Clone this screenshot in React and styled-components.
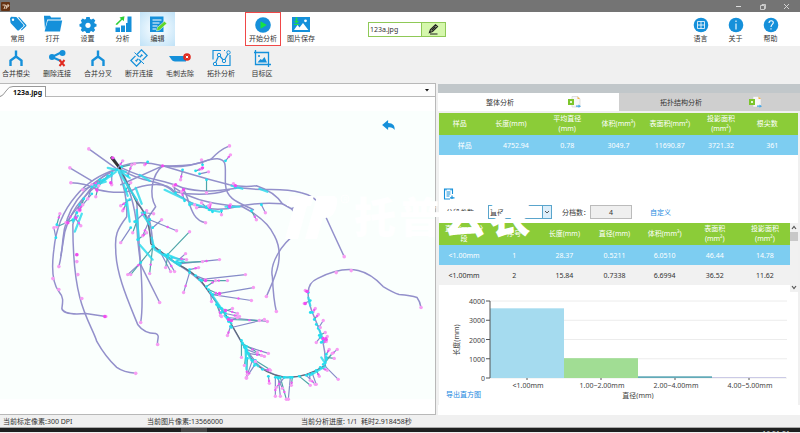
import React from "react";
import styled, { createGlobalStyle } from "styled-components";

const GlobalStyle = createGlobalStyle`
    * {
        box-sizing: border-box;
    }
    body {
        margin: 0;
        background: #f0f0f0;
    }
    body, button, input, select {
        font-family: "Noto Sans", "Noto Sans CJK SC", sans-serif;
        font-size: 7px;
        line-height: 9px;
        color: #333;
    }
    button {
        padding: 0;
        border: 0;
        background: none;
    }
`;

const BLUE = "#1590da";

const Window = styled.div`
    display: flex;
    flex-direction: column;
`;

const TitleBar = styled.header`
    height: 12px;
    display: flex;
    align-items: center;
    justify-content: space-between;
    padding: 0 10px 0 1px;
    background: #747474;
    svg {
        display: block;
    }
`;

const WindowButtons = styled.div`
    display: flex;
    gap: 17px;
    button {
        width: 7px;
        height: 7px;
    }
`;

const Toolbar = styled.nav`
    height: 34px;
    display: flex;
    align-items: center;
    padding-right: 12px;
    background: #fff;
`;

const SubToolbar = styled.nav`
    height: 37px;
    display: flex;
    gap: 11px;
    padding-left: 1px;
    background: #f0f0f0;
`;

const Group = styled.div`
    display: flex;
    gap: ${props => props.$gap || 0}px;
    margin-left: ${props => props.$left || "0"};
`;

const ToolButton = styled.button`
    width: ${props => props.$width || 35}px;
    height: 34px;
    display: flex;
    flex-direction: column;
    align-items: center;
    justify-content: center;
    gap: ${props => props.$gap || 1}px;
    white-space: nowrap;
    border: ${props => (props.$framed ? "1px solid #f04848" : "0")};
    background: ${props => (props.$active ? "radial-gradient(#f2faff 20%, #c0e2f7 100%)" : "none")};
    svg {
        display: block;
        flex: none;
    }
`;

const FileField = styled.div`
    display: flex;
    width: 78px;
    height: 15px;
    margin-left: 49px;
    border: 1px solid #8fc957;
    input {
        flex: 1;
        min-width: 0;
        padding: 0 1px;
        border: 0;
        border-right: 1px solid #8fc957;
    }
    button {
        width: 23px;
        background: #d5f7ac;
    }
    svg {
        display: block;
        margin: auto;
    }
`;

const Main = styled.main`
    position: relative;
    display: grid;
    grid-template-columns: minmax(0, 437fr) minmax(0, 363fr);
`;

const Viewer = styled.section`
    display: flex;
    flex-direction: column;
    margin-right: 1px;
    border: 1px solid #b8b8b8;
    border-left-width: 0;
    background: #fff;
`;

const TabStrip = styled.div`
    height: 13px;
    display: flex;
    align-items: flex-end;
    justify-content: space-between;
    padding-right: 5px;
    border-bottom: 1px solid #b8b8b8;
    background: #fcfcfc;
`;

const FileTab = styled.button`
    display: flex;
    align-items: center;
    height: 11px;
    margin-bottom: -1px;
    font-weight: bold;
    color: #111;
    svg {
        display: block;
    }
    span {
        height: 11px;
        padding: 1px 3px 0 0;
        border: 1px solid #999;
        border-width: 1px 1px 0 0;
        background: #fff;
    }
`;

const TabMenu = styled.button`
    height: 12px;
    svg {
        display: block;
    }
`;

const Scan = styled.svg`
    display: block;
    width: 100%;
`;

const Results = styled.section`
    display: flex;
    flex-direction: column;
    padding: 1px 0 0 1px;
    background: #f0f0f0;
`;

const Strip = styled.div`
    height: 9px;
    background: #c1c7ca;
`;

const Tabs = styled.div`
    display: grid;
    grid-template-columns: 1fr 1fr;
`;

const ResultTab = styled.button`
    height: 18px;
    display: flex;
    align-items: center;
    justify-content: space-between;
    padding: ${props => (props.$active ? "0 38px 0 48px" : "0 38px 0 41px")};
    background: ${props => (props.$active ? "#fff" : "#cfcfcf")};
`;

const Panel = styled.div`
    flex: 1;
    display: flex;
    flex-direction: column;
    margin: 2px 2px 0 1px;
    background: #fff;
`;

const Table = styled.table`
    width: 100%;
    table-layout: fixed;
    border-collapse: collapse;
    text-align: center;
    th {
        height: 22px;
        padding: 0;
        font-weight: normal;
        line-height: 10px;
        color: #fff;
        background: #8bcc38;
    }
    th.shifted {
        padding-right: 10px;
    }
    td {
        height: 20px;
        padding: 0;
        background: #f1f1f1;
    }
    tr.selected td {
        color: #fff;
        background: #7dcdf1;
    }
`;

const AddButton = styled.button`
    align-self: flex-start;
    margin: 33px 0 0 4px;
    svg {
        display: block;
    }
`;

const Form = styled.form`
    display: flex;
    align-items: center;
    height: 14px;
    margin: 5px 0 4px;
    padding-left: 7px;
    a {
        margin-left: 18px;
        color: #2288e0;
        text-decoration: none;
    }
`;

const Picker = styled.div`
    display: flex;
    width: 64px;
    height: 14px;
    margin: 0 10px 0 14px;
    border: 1px solid #5aa5cc;
    background: linear-gradient(to left, #dceefa 8px, #5aa5cc 8px, #5aa5cc 9px, #fff 9px);
    select {
        flex: 1;
        min-width: 0;
        padding: 0 1px;
        appearance: none;
        border: 0;
        background: none;
    }
    svg {
        width: 8px;
        height: 12px;
    }
`;

const CountInput = styled.input`
    width: 42px;
    height: 14px;
    padding: 0;
    border: 1px solid #bbb;
    background: #efefef;
    text-align: center;
`;

const ScrollArea = styled.div`
    display: flex;
    align-items: flex-start;
    height: 69px;
`;

const ScrollBar = styled.div`
    flex: none;
    width: 8px;
    height: 69px;
    display: flex;
    flex-direction: column;
    align-items: center;
    background: #f1f1f1;
    svg {
        display: block;
    }
`;

const Thumb = styled.div`
    width: 8px;
    height: 9px;
    margin-bottom: auto;
    background: #c8c8c8;
`;

const ChartBox = styled.figure`
    margin: 0;
    svg {
        display: block;
        width: 100%;
    }
`;

const ExportLink = styled.a`
    align-self: flex-start;
    margin: -9px 0 0 7px;
    color: #2288e0;
    text-decoration: none;
`;

const PanelFoot = styled.div`
    height: 10px;
    background: #fff;
`;

const Watermark = styled.div`
    position: absolute;
    top: 110px;
    left: 35%;
    display: flex;
    align-items: center;
    gap: 4px;
    pointer-events: none;
    color: #fff;
`;

const WatermarkText = styled.div`
    display: flex;
    gap: 3px;
    font-size: 42px;
    font-weight: 900;
    line-height: 44px;
`;

const StatusBar = styled.footer`
    height: 12px;
    display: grid;
    grid-template-columns: 144fr 154fr 499fr;
    align-items: center;
    padding-left: 3px;
    background: #f0f0f0;
    white-space: pre;
`;

const TaskBar = styled.div`
    height: 5px;
    display: flex;
    justify-content: flex-end;
    padding: 1px 10px 0 0;
    overflow: hidden;
    color: #ddd;
    border-top: 1px solid #aaa;
    background: linear-gradient(to right, #1f2020 181px, #484848 181px, #484848 207px, #1f2020 207px);
`;

const Icon = ({ w = 18, h = 18, children }) => (
    <svg width={w} height={h} viewBox={`0 0 ${w} ${h}`} fill={BLUE} aria-hidden="true">
        {children}
    </svg>
);

const TagIcon = () => (
    <Icon>
        <path d="M1 3.2 2.2 1.8 7.4 2 14.2 9.6c.5.6.5 1.2 0 1.7l-4.2 3.9c-.6.5-1.2.5-1.7 0L1.6 8z" />
        <path d="M9 2.2h1.4l6.8 7.5c.4.6.4 1 0 1.5l-4.5 4.4-.8-.8 4-4.2z" />
        <circle cx="4" cy="4.8" r="1.2" fill="#fff" />
    </Icon>
);

const FolderIcon = () => (
    <Icon w={20}>
        <path d="M1 2V.8h6l1.2 1.8h9.6v2H4.3L2 14z" />
        <path d="M4.8 5.6h14.4L17 16.6H1.6z" />
    </Icon>
);

const GearIcon = () => (
    <Icon>
        <path d="M7.3 2h3.4l.4 1.9 1.3.6 1.9-1.1 2 2.2-1.1 1.8.5 1.2 1.8.5v2.4l-1.8.5-.6 1.3 1.100 1.800-2 2.100-1.900-1.100-1.200.6-.5 1.700H7.300l-.5-1.700-1.300-.6-1.900 1-1.900-2 1-1.900-.5-1.200-1.700-.5V9.100l1.700-.5.6-1.200-1-1.800 1.900-2.100 1.900 1 1.300-.6z" />
        <circle cx="9" cy="10.300" r="2.600" fill="#fff" />
    </Icon>
);

const StatsIcon = () => (
    <Icon>
        <path d="M1.500 12.500H6v4.500H1.500zM7 10.500h4V17H7zM12 7h0M12 8h1.500v9H12zM13.500 1.500H17.500V17h-4z" />
        <path d="M1.500 9.200 7 4 5.500 2.500 10.500 1.300l-.8 5-1.500-1.500L3 10z" fill="#2fcf35" />
    </Icon>
);

const EditIcon = () => (
    <Icon>
        <path d="M1 1.500h13.500V17H1z" />
        <path d="M3.500 5h9M3.500 8h7M3.500 11h5M3.500 14h3.500" stroke="#fff" strokeWidth="1" />
        <path d="m7.500 16 .8-3.500 7.200-6.300 2.300 2.400-7.100 6.400z" fill="#5fd628" stroke="#fff" strokeWidth=".5" />
    </Icon>
);

const PlayIcon = () => (
    <Icon>
        <circle cx="9" cy="10" r="7.800" />
        <path d="M6.500 6.300v7.400L12.800 10z" fill="#15e343" />
    </Icon>
);

const PictureIcon = () => (
    <Icon>
        <path d="M0 2h18v15H0z" />
        <path d="m2 15 3.500-5 2 2.500L11 8l5.300 7z" fill="#fff" />
        <circle cx="13.500" cy="5.800" r="1.400" fill="#fff" />
        <path d="M3.700 2.500h1.600V6H7L4.500 8.500 2 6h1.700zM2 9h5v1H2z" fill="#20df45" />
    </Icon>
);

const RoundIcon = ({ children }) => (
    <Icon w={16} h={17}>
        <circle cx="8" cy="9" r="7.300" />
        <g fill="none" stroke="#fff" strokeWidth="1.100">{children}</g>
    </Icon>
);

const MergeIcon = () => (
    <Icon w={16}>
        <path d="M8 1.500v7M8 7.500 2.500 11.500V17M8 7.500l5.500 4V17" fill="none" stroke={BLUE} strokeWidth="2.400" />
    </Icon>
);

const DeleteLinkIcon = () => (
    <Icon>
        <path d="m4 8 9-4.500M4 8l9 4" stroke={BLUE} strokeWidth="2" />
        <circle cx="4" cy="8" r="3" />
        <circle cx="14.500" cy="4" r="3" />
        <path d="m11.500 11 5 6m0-6-5 6" stroke="#e12b20" strokeWidth="2" />
    </Icon>
);

const UnlinkIcon = () => (
    <Icon>
        <g fill="none" stroke={BLUE} strokeWidth="1.300" transform="rotate(-45 9 9)">
            <path d="M8 5H1.500v8H8v-3M5 8v2M10 13h6.500V5H10v3M13 8v2M4.500 9H8M10 9h3.500" />
        </g>
        <path d="m4.500 3.500 2 2M11.500 12.500l2.500 2.500" stroke={BLUE} />
    </Icon>
);

const SpurIcon = () => (
    <Icon w={22}>
        <path d="M0 7h17v5.500H6C3 12.500 2 9.500 0 7z" />
        <circle cx="18" cy="8" r="3.800" fill="#e12b20" />
        <path d="m16.800 6.800 2.400 2.400m0-2.400-2.400 2.400" stroke="#fff" />
    </Icon>
);

const TopologyIcon = () => (
    <Icon w={19}>
        <path d="M9 1.500H1v9M12 1.500h1M18 6v10.500H4M3 15 7 6l5 6 4.500-8" fill="none" stroke={BLUE} strokeWidth="1.200" />
        <g fill="#f0f0f0" stroke={BLUE}>
            <circle cx="3" cy="15" r="1.700" />
            <circle cx="7" cy="6" r="1.700" />
            <circle cx="12" cy="12" r="1.700" />
            <circle cx="16.500" cy="3.500" r="1.700" />
        </g>
    </Icon>
);

const TargetIcon = () => (
    <Icon>
        <path d="M2.500 1v14.500H18M1 3.500h14.500V18" fill="none" stroke={BLUE} strokeWidth="1.300" />
        <path d="m4.500 13.500 3-3.500 1.500 1 2.500-3 2.500 5.500z" />
        <circle cx="6" cy="7" r="1" />
    </Icon>
);

const SheetIcon = () => (
    <Icon w={13} h={12}>
        <path d="M4 .5h6L12 3v8H4z" fill="#f7f7f7" stroke="#ccc" strokeWidth=".6" />
        <path d="M9.500.500 12 3H9.500z" fill="#f4b44a" />
        <path d="M0 3h6v6H0z" fill="#7cc52b" />
        <path d="M2 5h2v2H2z" fill="#e8f7d5" />
        <path d="M8 9.500h2.500V8.500l2.500 1.800-2.500 1.500v-1H8z" fill="#45a6e6" />
    </Icon>
);

const Arrow = ({ up }) => (
    <Icon w={8} h={9}>
        <path d={up ? "m2 6 2-2.500L6 6" : "m2 3 2 2.500L6 3"} fill="none" stroke="#555" strokeWidth="1.200" />
    </Icon>
);

const TOOLS = [
    { label: "常用", icon: <TagIcon /> },
    { label: "打开", icon: <FolderIcon /> },
    { label: "设置", icon: <GearIcon /> },
    { label: "分析", icon: <StatsIcon /> },
    { label: "编辑", icon: <EditIcon />, active: true }
];

const HELP = [
    { label: "语言", icon: <RoundIcon><path d="M4.500 5.500h7v7h-7zM8 5.500v7M4.500 9h7" strokeWidth=".8" /></RoundIcon> },
    { label: "关于", icon: <RoundIcon><path d="M8 4.500V6M8 7.500v6" /></RoundIcon> },
    { label: "帮助", icon: <RoundIcon><path d="M6 7c0-3 4.300-3 4.300-.4C10.300 8.500 8 8.500 8 11M8 12.300v1.200" /></RoundIcon> }
];

const EDIT_TOOLS = [
    { label: "合并根尖", icon: <MergeIcon /> },
    { label: "删除连接", icon: <DeleteLinkIcon /> },
    { label: "合并分叉", icon: <MergeIcon /> },
    { label: "断开连接", icon: <UnlinkIcon /> },
    { label: "毛刺去除", icon: <SpurIcon /> },
    { label: "拓扑分析", icon: <TopologyIcon /> },
    { label: "目标区", icon: <TargetIcon /> }
];

// long roots, in scan coordinates
const ROOTS = [
    "M116 170C88 178 58 205 54 250C51 272 53 284 59 292C64 298 63 302 62 309C63 314 74 315 86 314L106 317",
    "M116 170C98 176 78 200 73 225C73 250 74 275 80 298C85 318 94 332 97 342Q106 358 117 368Q124 373 136 374",
    "M112 172C88 184 66 205 63 240Q62 255 59 267",
    "M112 174C90 190 72 205 65 232L61 256",
    "M119 172Q128 195 127 217C117 230 115 236 116 250C116 275 130 305 138 325C143 332 149 334 156 334C161 336 157 340 158 345",
    "M121 172C131 190 137 210 138 240Q140 258 141 265C142 285 144 305 141 323",
    "M137 200Q139 240 141 265L160 303",
    "M122 166Q140 160 163 166Q195 167 212 159Q220 150 230 146",
    "M163 166C195 170 205 158 218 159C229 160 225 168 226 185C227 200 240 203 254 210",
    "M163 166L190 174Q210 180 230 185Q245 188 257 186Q275 192 283 204L292 209L300 206M292 209L299 217",
    "M122 170C145 185 160 178 175 193C195 206 210 214 237 207Q260 202 283 204",
    "M122 168C150 182 160 178 183 188C205 194 225 190 240 188C270 192 280 187 302 193Q316 196 322 207Q330 225 345 257",
    "M175 188C195 202 220 205 243 207Q268 220 275 236C287 258 274 280 267 297",
    "M296 235C282 244 270 265 273 277Q274 300 277 312",
    "M183 188C191 200 190 220 206 223",
    "M71 183Q85 183 98 190Q125 196 137 188Q165 180 175 192Q205 198 230 190",
    "M89 149L117 169M70 168L92 181M163 166C152 175 149 195 156 207L149 217M121 185L163 166",
    "M149 216Q153 235 153 246C165 260 190 268 205 286"
];

const TAPROOT = "M114 158Q123 172 131 190Q140 206 149 220Q150 240 154 247Q165 255 177 264Q193 272 202 282Q218 305 228 318Q240 340 251 358Q265 374 285 378Q306 379 326 366Q327 345 316 320Q308 302 309 293Q309 283 318 279Q342 267 359 271Q372 274 384 287Q394 293 400 295Q412 296 418 298Q421 302 422 308";

// lateral roots: start point, end point
const LATERALS = [
    [154, 247, 131, 275], [160, 251, 171, 272], [165, 255, 175, 272], [168, 255, 190, 232], [150, 220, 177, 231],
    [153, 228, 162, 220], [153, 247, 150, 274], [177, 262, 186, 254], [181, 264, 220, 260], [179, 263, 203, 262],
    [190, 273, 184, 293], [200, 280, 246, 275], [202, 281, 228, 281], [213, 295, 254, 288], [213, 295, 252, 301],
    [217, 305, 222, 317], [222, 309, 238, 314], [228, 318, 268, 322], [230, 320, 260, 321], [232, 328, 265, 320],
    [231, 327, 228, 336], [242, 341, 242, 358], [247, 347, 269, 354], [247, 350, 265, 357], [248, 359, 247, 379],
    [253, 361, 248, 375], [255, 366, 247, 378], [256, 361, 270, 370], [276, 378, 276, 397], [279, 379, 281, 397],
    [281, 378, 287, 400], [291, 378, 289, 400], [285, 378, 277, 388], [300, 377, 311, 386], [307, 376, 316, 385],
    [313, 374, 317, 385], [317, 371, 320, 377], [324, 365, 339, 380], [327, 360, 338, 350], [327, 358, 335, 359],
    [324, 342, 328, 337], [319, 329, 324, 321], [315, 320, 319, 315], [311, 301, 305, 304], [309, 293, 306, 291],
    [320, 336, 326, 333], [269, 377, 270, 384], [311, 313, 314, 312], [207, 287, 216, 281], [200, 174, 209, 172],
    [183, 170, 181, 180], [207, 180, 207, 193], [226, 161, 231, 155], [203, 165, 202, 160], [196, 171, 202, 169],
    [207, 208, 202, 203], [210, 210, 211, 204], [222, 211, 222, 215], [229, 208, 231, 205], [262, 205, 266, 213],
    [252, 211, 257, 220], [207, 207, 197, 208], [148, 162, 145, 165], [122, 167, 135, 164], [117, 170, 123, 161],
    [112, 173, 112, 185], [100, 180, 96, 197], [98, 184, 83, 190], [80, 205, 66, 223], [73, 220, 57, 227],
    [75, 218, 81, 226], [92, 194, 78, 211], [126, 205, 123, 211], [131, 228, 121, 243], [135, 222, 147, 211],
    [137, 222, 133, 233], [150, 220, 143, 236], [56, 238, 54, 228], [57, 225, 60, 214], [141, 263, 128, 275],
    [172, 258, 187, 260], [168, 257, 166, 268], [190, 270, 199, 268], [196, 276, 206, 280], [209, 290, 220, 295],
    [211, 293, 212, 302], [219, 307, 221, 316], [222, 313, 233, 309], [226, 314, 240, 317], [229, 322, 238, 318],
    [243, 344, 258, 353], [245, 348, 256, 362], [249, 354, 262, 356], [247, 352, 245, 366], [263, 370, 271, 371],
    [278, 378, 283, 389], [293, 378, 292, 386], [310, 375, 311, 381], [321, 368, 328, 371], [326, 363, 333, 354],
    [327, 355, 330, 350], [321, 338, 317, 343], [322, 343, 327, 342], [317, 325, 321, 328], [313, 313, 316, 309],
    [108, 176, 99, 186], [104, 180, 92, 185], [92, 187, 88, 199], [84, 199, 80, 211], [77, 213, 83, 205],
    [128, 176, 132, 165], [126, 190, 131, 183], [130, 200, 121, 206], [145, 213, 154, 214], [138, 240, 147, 233],
    [176, 193, 174, 186], [185, 201, 182, 192], [190, 205, 195, 205], [213, 212, 209, 206], [236, 188, 234, 184]
];

// dense patches where many segments join
const JOINTS = "M96 187L116 172M101 181L112 176M118 170L130 178M119 172L137 200M73 222L78 216M140 175L150 181M165 190L184 199M190 203L204 207M209 210L220 212M226 207L240 207M232 186L243 189M260 189L268 192M127 200L130 222M137 210L139 240M142 213L150 225M152 238L155 250L168 258L180 266M140 245L153 260M213 296L224 312M225 316L232 324M243 343L252 361L259 367M246 348L247 370M284 378L292 378M311 376L326 367M322 358L326 364M319 328L325 343M309 298L311 306M92 186L106 182M108 168L126 172M168 255L184 262M124 185L128 196M75 232L82 214M136 188L142 204";

const ReplyArrow = () => (
    <path d="M383 125l6-5v3c5 0 7 3 6.500 7-1.500-2-3.500-3-6.500-2.500v2.500z" fill={BLUE} />
);

const RootScan = () => (
    <Scan viewBox="0 97 436 318" role="img" aria-label="123a.jpg">
        <rect x="0" y="111" width="436" height="289" fill="#fafffd" />
        <g fill="none" strokeLinecap="round" strokeLinejoin="round">
            <g stroke="#9390cb" strokeWidth="1.500">
                {ROOTS.map(d => <path key={d} d={d} />)}
                <path d={TAPROOT} />
            </g>
            <path d="M120 168Q128 185 137 203Q150 216 151 244L177 264Q193 272 202 282L228 318L251 358Q262 374 285 378Q306 379 326 366" stroke="#5d6d78" strokeWidth="1.200" />
            <path d="M112 158L120 168" stroke="#333" strokeWidth="3" />
            {LATERALS.map(([x1, y1, x2, y2], i) => (
                <path key={i} d={`M${x1} ${y1}L${x2} ${y2}`} stroke={i % 3 ? "#858bc8" : "#4fa5a8"} strokeWidth="1.200" />
            ))}
            <path d={JOINTS} stroke="#2fdcec" strokeWidth="2.200" opacity=".85" />
        </g>
        {LATERALS.map(([x1, y1, x2, y2], i) => (
            <g key={i}>
                <circle cx={x1} cy={y1} r="1.400" fill="#22dff0" />
                <circle cx={x2} cy={y2} r="1.700" fill="#f79df3" />
                {i % 2 === 0 && <circle cx={(x1 + x2 * 2) / 3} cy={(y1 + y2 * 2) / 3} r="1.200" fill="#f05bf2" />}
            </g>
        ))}
        <g fill="#f79df3">
            {[[106, 317], [136, 374], [158, 345], [141, 323], [160, 303], [89, 149], [70, 168], [71, 183], [230, 146], [206, 223], [345, 257], [267, 297], [277, 312], [422, 308], [352, 271], [337, 273], [59, 267], [59, 290], [53, 279], [82, 299], [77, 255], [77, 262], [78, 275]].map(([x, y]) => (
                <circle key={`${x}-${y}`} cx={x} cy={y} r="1.800" />
            ))}
        </g>
        <g fill="#f04cf0">
            {[[113, 158], [203, 168], [111, 183], [97, 190], [80, 210], [76, 218], [68, 223], [77, 255], [105, 317], [184, 190], [176, 185], [163, 166], [306, 304], [308, 292], [324, 339], [327, 340], [226, 311], [232, 321], [206, 281], [220, 294], [229, 320], [236, 186], [230, 207]].map(([x, y]) => (
                <circle key={`${x}-${y}`} cx={x} cy={y} r="1.700" />
            ))}
        </g>
        <ReplyArrow />
    </Scan>
);

const SUMMARY_HEAD = [
    ["样品"], ["长度(mm)"], ["平均直径", "(mm)"], ["体积(mm³)"], ["表面积(mm²)"], ["投影面积", "(mm²)"], ["根尖数"]
];
const SUMMARY = ["样品", "4752.94", "0.78", "3049.7", "11690.87", "3721.32", "361"];
const SHIFTED = ["样品", "长度(mm)", "根尖数"];

const CLASS_HEAD = [
    ["直径(mm)分", "段"], ["序号"], ["长度(mm)"], ["直径(mm)"], ["体积(mm³)"], ["表面积", "(mm²)"], ["投影面积", "(mm²)"]
];
const CLASSES = [
    ["<1.00mm", "1", "28.37", "0.5211", "6.0510", "46.44", "14.78"],
    ["<1.00mm", "2", "15.84", "0.7338", "6.6994", "36.52", "11.62"]
];

const HeadRow = ({ cells, shifted = [] }) => (
    <thead>
        <tr>
            {cells.map(lines => (
                <th key={lines[0]} className={shifted.includes(lines[0]) ? "shifted" : undefined}>
                    {lines.map((line, i) => (
                        <React.Fragment key={line}>
                            {i > 0 && <br />}
                            {line}
                        </React.Fragment>
                    ))}
                </th>
            ))}
        </tr>
    </thead>
);

const BARS = [
    { label: "<1.00mm", value: 3620, color: "#a5dbef" },
    { label: "1.00~2.00mm", value: 1030, color: "#a1dd94" },
    { label: "2.00~4.00mm", value: 90, color: "#62aab8" },
    { label: "4.00~5.00mm", value: 45, color: "#c5c3e4" }
];

const Histogram = () => {
    const left = 51;
    const base = 86;
    const step = 74;
    const y = value => base - (value * 77) / 4000;
    return (
        <ChartBox>
            <svg viewBox="0 0 359 107" fontSize="7" fill="#444">
                {[0, 1000, 2000, 3000, 4000].map(tick => (
                    <g key={tick}>
                        <path d={`M${left} ${y(tick)}H348`} stroke="#ececec" />
                        <path d={`M${left - 4} ${y(tick)}H${left}`} stroke="#555" />
                        <text x={left - 5} y={y(tick) + 3} textAnchor="end">{tick}</text>
                    </g>
                ))}
                {BARS.map((bar, i) => (
                    <g key={bar.label}>
                        <rect x={left + i * step} y={y(bar.value)} width={step} height={base - y(bar.value)} fill={bar.color} />
                        <path d={`M${left + (i + 0.5) * step} ${base}v2`} stroke="#555" />
                        <text x={left + (i + 0.5) * step + 1} y="96" textAnchor="middle">{bar.label}</text>
                    </g>
                ))}
                <path d={`M${left} ${y(4000)}V${base}`} stroke="#555" />
                <text x="199" y="106" textAnchor="middle">直径(mm)</text>
                <text transform="translate(20 48) rotate(-90)" textAnchor="middle">长度(mm)</text>
            </svg>
        </ChartBox>
    );
};

const App = () => (
    <Window>
        <GlobalStyle />
        <TitleBar>
            <svg width="9" height="9" viewBox="0 0 9 9" aria-hidden="true">
                <rect width="9" height="9" rx="1" fill="#653313" />
                <path d="M1.500 3h3L3 7M5 7l1-4h2L7 5H5.500" fill="none" stroke="#f1dfcc" strokeWidth=".9" />
            </svg>
            <WindowButtons>
                <button aria-label="最小化"><Icon w={7} h={7}><path d="M1 3.500h5" stroke="#ddd" /></Icon></button>
                <button aria-label="还原"><Icon w={7} h={7}><path d="M1.500 2.500h4v4h-4zM3 2.500v-1h3.500v4h-1" fill="none" stroke="#ddd" strokeWidth=".8" /></Icon></button>
                <button aria-label="关闭"><Icon w={7} h={7}><path d="m1 1 5 5m0-5L1 6" stroke="#ddd" strokeWidth=".9" /></Icon></button>
            </WindowButtons>
        </TitleBar>

        <Toolbar>
            <Group>
                {TOOLS.map(tool => (
                    <ToolButton key={tool.label} $active={tool.active}>
                        {tool.icon}
                        {tool.label}
                    </ToolButton>
                ))}
            </Group>
            <Group $gap={2} $left="70px">
                <ToolButton $width={36} $framed><PlayIcon />开始分析</ToolButton>
                <ToolButton $width={36}><PictureIcon />图片保存</ToolButton>
            </Group>
            <FileField>
                <input aria-label="文件名" defaultValue="123a.jpg" />
                <button aria-label="重命名">
                    <svg width="11" height="11" viewBox="0 0 11 11">
                        <path d="m1.500 8.500 1-3L7.500.800l2 1.700-5 5zM2 10h7.500" fill="none" stroke="#222" strokeWidth="1.200" />
                        <path d="m3 6 4-4 1 1-4 4z" fill="#222" />
                    </svg>
                </button>
            </FileField>
            <Group $left="auto">
                {HELP.map(tool => (
                    <ToolButton key={tool.label}>
                        {tool.icon}
                        {tool.label}
                    </ToolButton>
                ))}
            </Group>
        </Toolbar>

        <SubToolbar>
            {EDIT_TOOLS.map(tool => (
                <ToolButton key={tool.label} $width={30} $gap={2}>
                    {tool.icon}
                    {tool.label}
                </ToolButton>
            ))}
        </SubToolbar>

        <Main>
            <Viewer>
                <TabStrip>
                    <FileTab>
                        <svg width="13" height="11" viewBox="0 0 13 11">
                            <path d="M0 11Q3 10 6 5T13 .5V11z" fill="#fff" />
                            <path d="M0 10.500Q3 10 6 5T13 .5" fill="none" stroke="#999" />
                        </svg>
                        <span>123a.jpg</span>
                    </FileTab>
                    <TabMenu aria-label="文件列表">
                        <Icon w={6} h={12}><path d="M1 5h4L3 7.500z" fill="#111" /></Icon>
                    </TabMenu>
                </TabStrip>
                <RootScan />
            </Viewer>

            <Results>
                <Strip />
                <Tabs>
                    <ResultTab $active>整体分析<SheetIcon /></ResultTab>
                    <ResultTab>拓扑结构分析<SheetIcon /></ResultTab>
                </Tabs>
                <Panel>
                    <Table>
                        <HeadRow cells={SUMMARY_HEAD} shifted={SHIFTED} />
                        <tbody>
                            <tr className="selected">
                                {SUMMARY.map(cell => <td key={cell}>{cell}</td>)}
                            </tr>
                        </tbody>
                    </Table>
                    <AddButton aria-label="添加">
                        <Icon w={12} h={12}>
                            <path d="M9.500 6V1h-8v10H7M3.500 4h4M3.500 6h4M3.500 8h3M3 1v1.500M8 1v1.500" fill="none" stroke={BLUE} strokeWidth="1.100" />
                            <path d="M9 7.500V12M7 9.800h4.500" stroke={BLUE} strokeWidth="1.200" />
                        </Icon>
                    </AddButton>
                    <Form>
                        <label htmlFor="param">分段参数</label>
                        <Picker>
                            <select id="param" defaultValue="直径">
                                <option>直径</option>
                            </select>
                            <svg viewBox="0 0 8 12"><path d="m2 5 2 2 2-2" fill="none" stroke="#555" /></svg>
                        </Picker>
                        <label htmlFor="count">分档数：</label>
                        <CountInput id="count" defaultValue="4" />
                        <a href="#custom">自定义</a>
                    </Form>
                    <ScrollArea>
                        <Table>
                            <HeadRow cells={CLASS_HEAD} />
                            <tbody>
                                {CLASSES.map((row, i) => (
                                    <tr key={row[1]} className={i === 0 ? "selected" : undefined}>
                                        {row.map((cell, j) => <td key={j}>{cell}</td>)}
                                    </tr>
                                ))}
                            </tbody>
                        </Table>
                        <ScrollBar>
                            <Arrow up />
                            <Thumb />
                            <Arrow />
                        </ScrollBar>
                    </ScrollArea>
                    <Histogram />
                    <ExportLink href="#export">导出直方图</ExportLink>
                </Panel>
                <PanelFoot />
            </Results>

            <Watermark>
                <svg width="70" height="48" viewBox="0 0 70 48" fill="#fff" aria-hidden="true">
                    <path d="M10 3h24l-3 10h-4L18 46H5l9-33H7zM37 3h16c5 0 5 5 3 12-2 8-6 10-13 10L37 46H25z" />
                    <circle cx="65" cy="6" r="4" fill="none" stroke="#fff" />
                    <text x="63" y="9" fontSize="7">R</text>
                </svg>
                <WatermarkText>
                    {["托", "普", "云", "农"].map(char => <span key={char}>{char}</span>)}
                </WatermarkText>
            </Watermark>
        </Main>

        <StatusBar>
            <span>当前标定像素:300 DPI</span>
            <span>当前图片像素:13566000</span>
            <span>当前分析进度: 1/1  耗时2.918458秒</span>
        </StatusBar>
        <TaskBar>16:51:21</TaskBar>
    </Window>
);

export default App;
